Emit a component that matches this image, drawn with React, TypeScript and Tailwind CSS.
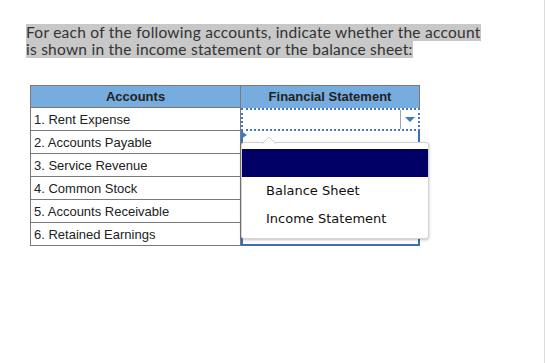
import React from 'react';

const accounts = [
  '1. Rent Expense',
  '2. Accounts Payable',
  '3. Service Revenue',
  '4. Common Stock',
  '5. Accounts Receivable',
  '6. Retained Earnings',
];

const options = ['Balance Sheet', 'Income Statement'];

const promptLines = [
  'For each of the following accounts, indicate whether the account',
  'is shown in the income statement or the balance sheet:',
];

const App: React.FC = () => {
  return (
    <div className="relative w-[545px] h-[363px] bg-white overflow-hidden border-r border-[#dcdcdc]">
      {/* prompt, highlighted line by line */}
      <div className="ml-[26px] pt-[24px] text-[15.5px] tracking-[0.25px] leading-[17px] text-[#333] font-['Lato',sans-serif]">
        {promptLines.map((l) => (
          <div key={l} className="w-fit bg-[#c8c8c8] whitespace-nowrap">
            {l}
          </div>
        ))}
      </div>

      {/* table */}
      <div className="ml-[30px] mt-[27px] flex font-['Liberation_Sans',Arial,sans-serif] text-[13px] text-[#222]">
        <div className="w-[210px] border-l border-[#7a7a7a]">
          <div className="h-[23px] bg-[#77acde] border-t border-b border-[#7a7a7a] flex items-center justify-center font-bold">
            Accounts
          </div>
          {accounts.map((a) => (
            <div key={a} className="h-[23px] border-b border-[#7a7a7a] flex items-center pl-[3px] pt-[1px]">
              {a}
            </div>
          ))}
        </div>
        <div className="w-[180px] border-l border-[#7a7a7a]">
          <div className="h-[23px] bg-[#77acde] border-t border-r border-[#7a7a7a] flex items-center justify-center font-bold">
            Financial Statement
          </div>
          <div className="relative h-[23px] border-2 border-dotted border-[#3d79c6] bg-white flex">
            <div className="flex-1" />
            <div className="w-[18px] border-l border-[#9aa7b8] flex items-center justify-center">
              <svg width="10" height="6" viewBox="0 0 10 6">
                <path d="M0 0h10L5 5z" fill="#3d79c6" />
              </svg>
            </div>
          </div>
          <div className="relative h-[115px] border-l-2 border-r-2 border-b-2 border-[#3c6fb6]">
            <svg className="absolute -left-[2px] top-0" width="6" height="8" viewBox="0 0 6 8">
              <path d="M0 0l6 4-6 4z" fill="#3d79c6" />
            </svg>
          </div>
        </div>
      </div>

      {/* open listbox */}
      <div className="absolute left-[241px] top-[142px] w-[188px] h-[97px] bg-white rounded-[3px] border border-[#d4d4d4] shadow-[0_1px_3px_rgba(0,0,0,0.25)] font-['DejaVu_Sans',Verdana,sans-serif] text-[13px] text-[#111]">
        <svg className="absolute left-[20px] -top-[7px]" width="14" height="8" viewBox="0 0 14 8">
          <path d="M0 8L7 1l7 7" fill="white" stroke="#d4d4d4" />
        </svg>
        <div className="mt-[6px] h-[28px] bg-[#000066]" />
        <div className="h-[28px] flex items-center pl-[24px]">{options[0]}</div>
        <div className="h-[28px] flex items-center pl-[24px]">{options[1]}</div>
      </div>
    </div>
  );
};

export default App;
